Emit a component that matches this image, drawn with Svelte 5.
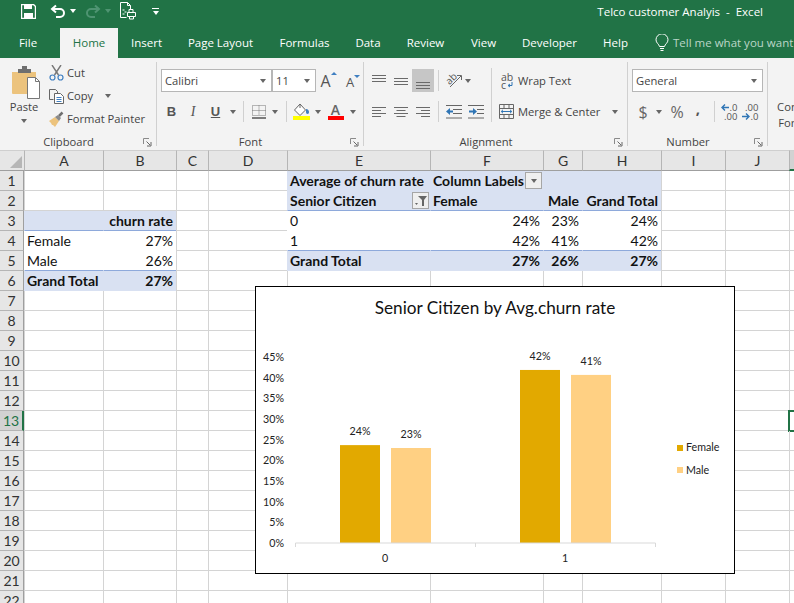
<script>
  const tabs = ['File', 'Home', 'Insert', 'Page Layout', 'Formulas', 'Data', 'Review', 'View', 'Developer', 'Help'];
  const cols = ['A', 'B', 'C', 'D', 'E', 'F', 'G', 'H', 'I', 'J', 'K'];
  const rowNums = Array.from({ length: 22 }, (_, i) => i + 1);

  const pv = 'pv';
  const hd = 'pv fill bold';
  const cells = {
    A3: { c: hd + ' line' },
    B3: { t: 'churn rate', c: hd + ' line right' },
    A4: { t: 'Female', c: pv },
    B4: { t: '27%', c: pv + ' right' },
    A5: { t: 'Male', c: pv + ' line' },
    B5: { t: '26%', c: pv + ' right line' },
    A6: { t: 'Grand Total', c: hd },
    B6: { t: '27%', c: hd + ' right' },
    E1: { t: 'Average of churn rate', c: hd },
    F1: { t: 'Column Labels', c: hd, btn: 'drop' },
    G1: { c: hd },
    H1: { c: hd },
    E2: { t: 'Senior Citizen', c: hd + ' line', btn: 'filter' },
    F2: { t: 'Female', c: hd + ' line' },
    G2: { t: 'Male', c: hd + ' line right' },
    H2: { t: 'Grand Total', c: hd + ' line right' },
    E3: { t: '0', c: pv },
    F3: { t: '24%', c: pv + ' right' },
    G3: { t: '23%', c: pv + ' right' },
    H3: { t: '24%', c: pv + ' right' },
    E4: { t: '1', c: pv + ' line' },
    F4: { t: '42%', c: pv + ' line right' },
    G4: { t: '41%', c: pv + ' line right' },
    H4: { t: '42%', c: pv + ' line right' },
    E5: { t: 'Grand Total', c: hd },
    F5: { t: '27%', c: hd + ' right' },
    G5: { t: '26%', c: hd + ' right' },
    H5: { t: '27%', c: hd + ' right' },
    K13: { c: 'sel' }
  };

  // chart, in page coordinates (the svg viewBox starts at the chart's corner)
  const base = 543;
  const perPct = 4.13;
  const ticks = [0, 5, 10, 15, 20, 25, 30, 35, 40, 45];
  const bars = [
    { x: 340, v: 23.7, label: '24%', color: '#e2a900' },
    { x: 391, v: 23, label: '23%', color: '#ffd083' },
    { x: 520, v: 41.9, label: '42%', color: '#e2a900' },
    { x: 571, v: 40.7, label: '41%', color: '#ffd083' }
  ];

  const alignTop = [[0, 14, 2], [0, 14, 5], [0, 14, 8]];
  const alignMid = [[0, 14, 5], [0, 14, 8], [0, 14, 11]];
  const alignBot = [[0, 14, 9], [0, 14, 12], [0, 14, 15]];
  const left = [[0, 14, 3], [0, 9, 6], [0, 14, 9], [0, 9, 12]];
  const center = [[0, 14, 3], [2.5, 11.5, 6], [0, 14, 9], [2.5, 11.5, 12]];
  const rightLines = [[0, 14, 3], [5, 14, 6], [0, 14, 9], [5, 14, 12]];
</script>

{#snippet lines(rows)}
  <svg class="ic" width="14" height="16" viewBox="0 0 14 16">
    {#each rows as r}
      <path d="M{r[0]} {r[2] + 0.5}H{r[1]}" stroke="#6a6a6a" fill="none" />
    {/each}
  </svg>
{/snippet}

{#snippet launcher()}
  <svg class="launch" width="9" height="9" viewBox="0 0 9 9">
    <path d="M.5 6V.5H6" stroke="#8a8a8a" fill="none" />
    <path d="M3.5 3.5L7 7M8 4v4H4" stroke="#666" fill="none" />
  </svg>
{/snippet}

<div class="app">
  <header class="qat">
    <svg class="ic qs" width="15" height="15" viewBox="0 0 15 15">
      <path d="M.5.5h12l2 2v12H.5z" fill="none" stroke="#fff" stroke-width="1.4" />
      <path d="M3 1h8v4H3zM3 9h9v5H3z" fill="#fff" />
    </svg>
    <svg class="ic qu" width="16" height="15" viewBox="0 0 16 15">
      <path d="M6 1.5L2 5l4 3.5M2.5 5H10a4 4 0 0 1 0 8H6" fill="none" stroke="#fff" stroke-width="2" />
    </svg>
    <i class="caret white q1"></i>
    <svg class="ic q2" width="16" height="15" viewBox="0 0 16 15">
      <path d="M10 1.5L14 5l-4 3.5M13.5 5H6a4 4 0 0 0 0 8h4" fill="none" stroke="#4f9472" stroke-width="2" />
    </svg>
    <i class="caret dim q1"></i>
    <svg class="ic q3" width="17" height="18" viewBox="0 0 17 18">
      <path d="M1.5.5h7l3 3v4M1.5.5v15h6" fill="none" stroke="#fff" />
      <path d="M8.5.5v3h3M3.5 8h2M5.5 10h2M3.5 12h2" fill="none" stroke="#fff" />
      <path d="M10 7.5h4v3h-4zM8.5 10.5h8v4h-8zM10.5 14.5h4v2.5h-4z" fill="#217346" stroke="#fff" />
    </svg>
    <span class="custom">
      <i class="bar"></i>
      <i class="caret white"></i>
    </span>
    <span class="doc">Telco customer Analyis&nbsp; -&nbsp; Excel</span>
  </header>

  <nav class="tabs">
    {#each tabs as tab}
      <span class="tab" class:active={tab === 'Home'} class:file={tab === 'File'}>{tab}</span>
    {/each}
    <span class="tell">
      <svg width="14" height="18" viewBox="0 0 14 18">
        <path d="M4.5 12.5C4 10 1 9 1 5.8a6 6 0 0 1 12 0c0 3.2-3 4.2-3.5 6.7zM5 14.5h4M5.5 16.5h3" fill="none" stroke="#fff" />
      </svg>
      Tell me what you want to do
    </span>
  </nav>

  <section class="ribbon">
    <div class="group g-clip">
      <div class="body clip">
        <div class="paste">
          <svg class="ic" width="29" height="33" viewBox="0 0 29 33">
            <path d="M0 6h24v21a1 1 0 0 1-1 1H1a1 1 0 0 1-1-1z" fill="#ecc37d" />
            <path d="M6 3h4V0h5v3h4v4H6z" fill="#6f6f6f" />
            <path d="M15.5 11.5h8l4 4v17h-12z" fill="#fff" stroke="#777" />
            <path d="M23.5 11.5v4h4" fill="none" stroke="#777" />
          </svg>
          <span>Paste</span>
          <i class="caret"></i>
        </div>
        <div class="clip-rows">
          <div class="clip-row">
            <svg class="ic" width="15" height="16" viewBox="0 0 15 16">
              <path d="M3 0l6.5 10M12 0L5.5 10" stroke="#777" stroke-width="1.4" fill="none" />
              <circle cx="3.5" cy="12.5" r="2.5" fill="none" stroke="#3f7fc1" stroke-width="1.2" />
              <circle cx="11.5" cy="12.5" r="2.5" fill="none" stroke="#3f7fc1" stroke-width="1.2" />
            </svg>
            Cut
          </div>
          <div class="clip-row">
            <svg class="ic" width="15" height="16" viewBox="0 0 15 16">
              <path d="M.5 1.5h6l2 2v2M.5 1.5v10h4" fill="none" stroke="#666" />
              <path d="M5.500 5.500h6l3 3v7h-9z" fill="#fff" stroke="#666" />
              <path d="M7.5 9.5h5M7.5 11.5h5M7.5 13.5h5" stroke="#3f7fc1" />
            </svg>
            Copy
            <i class="caret copy-caret"></i>
          </div>
          <div class="clip-row">
            <svg class="ic" width="15" height="16" viewBox="0 0 15 16">
              <path d="M0 10l6-4 4 4-4 6-2-2-1 0-1-2z" fill="#ecc37d" />
              <path d="M6 6l3-2 3 3-2 3z" fill="#8a8a8a" />
              <path d="M10 5l3.5-3.5" stroke="#6f6f6f" stroke-width="2.5" />
            </svg>
            Format Painter
          </div>
        </div>
      </div>
      <div class="label"><span>Clipboard</span>{@render launcher()}</div>
    </div>

    <div class="group g-font">
      <div class="body rows">
        <div class="row font-a">
          <div class="combo">Calibri<i class="caret"></i></div>
          <div class="combo">11<i class="caret"></i></div>
          <span class="grow">A<i class="tip"></i></span>
          <span class="grow small">A<i class="tip down"></i></span>
        </div>
        <div class="row font-b">
          <b class="glyph">B</b>
          <i class="glyph ital">I</i>
          <b class="glyph under">U</b>
          <i class="caret"></i>
          <i class="vsep"></i>
          <svg class="ic" width="14" height="14" viewBox="0 0 14 14">
            <path d="M.5.5h13v10h-13zM7 .5v10M.5 5.5h13" fill="none" stroke="#777" stroke-dasharray="1 1" />
            <path d="M0 13h14" stroke="#555" stroke-width="1.5" />
          </svg>
          <i class="caret"></i>
          <i class="vsep"></i>
          <svg class="ic" width="17" height="18" viewBox="0 0 17 18">
            <path d="M7 1L1.5 7 7 12.5 12.5 7z" fill="#fff" stroke="#666" />
            <path d="M7 1V5" stroke="#666" />
            <path d="M13 6c2 0 3 1.5 3 3 0 1-.5 2-1.5 2S13 10 13 9z" fill="#3f7fc1" />
            <rect y="13" width="17" height="4" fill="#ffff00" />
          </svg>
          <i class="caret"></i>
          <span class="fcolor">A<i></i></span>
          <i class="caret"></i>
        </div>
      </div>
      <div class="label"><span>Font</span>{@render launcher()}</div>
    </div>

    <div class="group g-align">
      <div class="body rows-split">
        <div class="rows align-left">
          <div class="row al-a">
            {@render lines(alignTop)}
            {@render lines(alignMid)}
            <span class="pressed">{@render lines(alignBot)}</span>
            <i class="vsep"></i>
            <span class="orient">
              <svg class="ic" width="17" height="17" viewBox="0 0 17 17">
                <text x="1" y="11" transform="rotate(-45 5 9)" class="orient-t">ab</text>
                <path d="M4 15L15 4M11 3.5h4.5V8" fill="none" stroke="#666" />
              </svg>
              <i class="caret"></i>
            </span>
          </div>
          <div class="row al-b">
            {@render lines(left)}
            {@render lines(center)}
            {@render lines(rightLines)}
            <i class="vsep"></i>
            <svg class="ic" width="16" height="14" viewBox="0 0 16 14">
              <path d="M0 .5h16M7 4.5h9M7 8.5h9M0 13h16" stroke="#666" fill="none" />
              <path d="M0 6.500L4 3v2.5h3v2H4V10z" fill="#2f75b5" />
            </svg>
            <svg class="ic" width="16" height="14" viewBox="0 0 16 14">
              <path d="M0 .5h16M9 4.5h7M9 8.5h7M0 13h16" stroke="#666" fill="none" />
              <path d="M9 6.5L5 3v2.5H1v2h4V10z" fill="#2f75b5" />
            </svg>
          </div>
        </div>
        <i class="vsep tall"></i>
        <div class="rows align-right">
          <div class="row wrap">
            <span class="abc">
              <span>ab</span>
              <span class="abc-c">c
                <svg width="6" height="6" viewBox="0 0 6 6">
                  <path d="M5 0v3.500H1.500M3 2L1 3.500 3 5" fill="none" stroke="#2f75b5" />
                </svg>
              </span>
            </span>
            Wrap Text
          </div>
          <div class="row merge">
            <svg class="ic" width="15" height="15" viewBox="0 0 15 15">
              <path d="M.5.5h14v14H.5zM.5 4.5h14M.5 10.5h14M5 .5v4M10 .5v4M5 10.5v4M10 10.5v4" fill="none" stroke="#666" />
              <path d="M2.5 7.5h10" stroke="#2f75b5" />
              <path d="M4 5.8L2.2 7.5 4 9.2M11 5.8l1.8 1.7L11 9.2" fill="none" stroke="#2f75b5" />
            </svg>
            Merge &amp; Center
            <i class="caret merge-caret"></i>
          </div>
        </div>
      </div>
      <div class="label"><span>Alignment</span>{@render launcher()}</div>
    </div>

    <div class="group g-num">
      <div class="body rows">
        <div class="row num-a">
          <div class="combo">General<i class="caret"></i></div>
        </div>
        <div class="row num-b">
          <span class="big">$</span>
          <i class="caret"></i>
          <span class="big">%</span>
          <b class="comma">,</b>
          <i class="vsep"></i>
          <span class="dec">
            <span class="dec-row">
              <svg width="8" height="7" viewBox="0 0 8 7"><path d="M8 3.5H2M4 .5l-3 3 3 3" fill="none" stroke="#2f75b5" stroke-width="1.4" /></svg>
              .0
            </span>
            <span>.00</span>
          </span>
          <span class="dec">
            <span>.00</span>
            <span class="dec-row">
              <svg width="8" height="7" viewBox="0 0 8 7"><path d="M0 3.5h6M4 .5l3 3-3 3" fill="none" stroke="#2f75b5" stroke-width="1.4" /></svg>
              .0
            </span>
          </span>
        </div>
      </div>
      <div class="label"><span>Number</span>{@render launcher()}</div>
    </div>

    <div class="cond">Conditional<br />Formatting</div>
  </section>

  <main class="sheet">
    <div class="corner"><i></i></div>
    {#each cols as col}
      <div class="colhead" class:on={col === 'K'}>{col}</div>
    {/each}
    {#each rowNums as n}
      <div class="rowhead" class:on={n === 13}>{n}</div>
      {#each cols as col}
        {@const cell = cells[col + n]}
        <div class="cell {cell ? cell.c : ''}">
          {#if cell && cell.t}<span>{cell.t}</span>{/if}
          {#if cell && cell.btn === 'drop'}
            <i class="fbtn"><i class="caret"></i></i>
          {:else if cell && cell.btn === 'filter'}
            <i class="fbtn">
              <svg width="14" height="12" viewBox="0 0 14 12">
                <path d="M4 1h9L10 5v6H8V5z" fill="#666" />
                <path d="M1 8h3L2.5 10z" fill="#666" />
              </svg>
            </i>
          {/if}
        </div>
      {/each}
    {/each}

    <figure class="chart">
      <svg width="478" height="286" viewBox="256 287 478 286">
        <text class="title" x="495" y="314">Senior Citizen by Avg.churn rate</text>
        {#each ticks as t}
          <text class="tick" x="284" y={base - t * perPct + 4}>{t}%</text>
        {/each}
        {#each bars as b}
          <rect x={b.x} y={base - b.v * perPct} width="40" height={b.v * perPct} fill={b.color} />
          <text class="val" x={b.x + 20} y={base - b.v * perPct - 10}>{b.label}</text>
        {/each}
        <path d="M295.5 547v-4h360v4M475.5 543v4" fill="none" stroke="#d9d9d9" />
        <text class="val" x="385" y="562">0</text>
        <text class="val" x="565" y="562">1</text>
        <rect x="677" y="445" width="6" height="6" fill="#e2a900" />
        <text class="leg" x="686" y="451">Female</text>
        <rect x="677" y="467" width="6" height="6" fill="#ffd083" />
        <text class="leg" x="686" y="474">Male</text>
      </svg>
    </figure>
  </main>
</div>

<style>
  :global(body) {
    margin: 0;
    overflow: hidden;
  }

  .app {
    width: 794px;
    height: 603px;
    overflow: hidden;
    background: #fff;
    font-family: "Open Sans", sans-serif;
    font-size: 11.5px;
    color: #444;
  }

  i {
    font-style: normal;
  }

  .ic {
    display: block;
    flex: none;
  }

  .caret {
    display: block;
    flex: none;
    width: 0;
    height: 0;
    border: 3.5px solid transparent;
    border-top: 4px solid #666;
    border-bottom: 0;
  }

  .caret.white {
    border-top-color: #fff;
  }

  .caret.dim {
    border-top-color: #4f9472;
  }

  /* title bar */
  .qat {
    height: 28px;
    box-sizing: border-box;
    padding-bottom: 6px;
    background: #217346;
    display: flex;
    align-items: center;
    color: #fff;
  }

  .qs {
    margin-left: 21px;
  }

  .qu {
    margin-left: 14px;
  }

  .q1 {
    margin-left: 4px;
  }

  .q2 {
    margin-left: 9px;
  }

  .q3 {
    margin-left: 8px;
  }

  .custom {
    display: flex;
    flex-direction: column;
    align-items: center;
    gap: 2px;
    margin-left: 16px;
  }

  .bar {
    display: block;
    width: 7px;
    height: 1px;
    background: #fff;
  }

  .doc {
    margin-left: auto;
    margin-right: 31px;
  }

  /* tabs */
  .tabs {
    height: 30px;
    background: #217346;
    display: grid;
    grid-template-columns: 54px 58px 57px 91px 77px 50px 65px 51px 81px 51px auto;
    padding-left: 6px;
    color: #fff;
    line-height: 30px;
    white-space: nowrap;
  }

  .tab {
    text-align: center;
  }

  .tab.file {
    padding-right: 10px;
  }

  .tab.active {
    background: #f3f3f3;
    color: #217346;
  }

  .tell {
    display: flex;
    align-items: center;
    gap: 4px;
    padding-left: 14px;
    color: #bcd6c8;
  }

  /* ribbon */
  .ribbon {
    height: 88px;
    padding-top: 4px;
    background: #f3f3f3;
    display: flex;
    align-items: flex-start;
    font-size: 11.2px;
    white-space: nowrap;
    overflow: hidden;
  }

  .group {
    height: 84px;
    border-right: 1px solid #d0d0d0;
    box-sizing: border-box;
    display: flex;
    flex-direction: column;
    flex: none;
  }

  .g-clip {
    width: 157px;
  }

  .g-font {
    width: 207px;
  }

  .g-align {
    width: 264px;
  }

  .g-num {
    width: 140px;
  }

  .body {
    height: 71px;
    flex: none;
  }

  .label {
    display: flex;
    align-items: center;
    height: 16px;
    flex: none;
    padding-right: 4px;
  }

  .label span {
    flex: 1;
    text-align: center;
    padding-right: 6px;
  }

  .launch {
    flex: none;
    margin-top: 2px;
  }

  .clip {
    display: flex;
  }

  .paste {
    width: 48px;
    display: flex;
    flex-direction: column;
    align-items: center;
    padding: 4px 0 0 4px;
    box-sizing: border-box;
    line-height: 16px;
  }

  .paste span {
    margin: 0 4px 0 0;
  }

  .paste .caret {
    margin: 4px 4px 0 0;
  }

  .clip-rows {
    margin: -1px 0 0 1px;
  }

  .clip-row {
    height: 23px;
    display: flex;
    align-items: center;
    gap: 3px;
  }

  .copy-caret {
    margin-left: 9px;
  }

  .rows {
    padding-top: 7px;
    box-sizing: border-box;
    display: flex;
    flex-direction: column;
    gap: 8px;
  }

  .row {
    height: 23px;
    flex: none;
    display: grid;
    align-items: center;
    justify-items: center;
  }

  .vsep {
    display: block;
    width: 1px;
    height: 21px;
    background: #d0d0d0;
  }

  .vsep.tall {
    margin-top: 6px;
    height: 54px;
    flex: none;
  }

  .combo {
    height: 23px;
    width: 100%;
    box-sizing: border-box;
    background: #fff;
    border: 1px solid #b6b6b6;
    padding: 0 5px 0 3px;
    display: flex;
    align-items: center;
    justify-content: space-between;
  }

  .font-a {
    grid-template-columns: 111px 44px 25px 24px;
    margin-left: 4px;
  }

  .font-b {
    grid-template-columns: 21px 22px 23px 11px 11px 19px 13px 10px 21px 12px 23px 11px;
    margin-left: 4px;
  }

  .grow {
    display: flex;
    font-size: 16px;
    color: #555;
  }

  .grow.small {
    font-size: 13px;
    padding-top: 3px;
  }

  .tip {
    display: block;
    margin-top: 2px;
    border: 3px solid transparent;
    border-top: 0;
    border-bottom: 3px solid #3f7fc1;
    width: 0;
    height: 0;
  }

  .tip.down {
    border-bottom: 0;
    border-top: 3px solid #3f7fc1;
  }

  .glyph {
    font-size: 13px;
    color: #555;
    font-family: "Liberation Sans", sans-serif;
  }

  .ital {
    font-family: "Liberation Serif", serif;
    font-style: italic;
    font-size: 14px;
  }

  .under {
    text-decoration: underline;
  }

  .fcolor {
    display: flex;
    flex-direction: column;
    align-items: center;
    font-size: 14px;
    line-height: 13px;
    font-weight: 600;
    color: #666;
  }

  .fcolor i {
    display: block;
    width: 16px;
    height: 4px;
    background: #f00;
  }

  .rows-split {
    display: flex;
  }

  .align-left {
    width: 123px;
    flex: none;
    margin-left: 4px;
  }

  .al-a {
    grid-template-columns: 22px 22px 22px 8px 32px;
  }

  .al-b {
    grid-template-columns: 22px 22px 22px 8px 24px 20px;
  }

  .pressed {
    width: 22px;
    height: 23px;
    background: #c6c6c6;
    display: flex;
    align-items: center;
    justify-content: center;
  }

  .orient {
    display: flex;
    align-items: center;
    gap: 2px;
  }

  .orient-t {
    font-size: 10px;
    fill: #555;
  }

  .wrap,
  .merge {
    display: flex;
  }

  .wrap {
    padding-left: 9px;
    gap: 4px;
  }

  .merge {
    padding-left: 7px;
    gap: 4px;
  }

  .merge-caret {
    margin-left: 8px;
  }

  .abc {
    display: flex;
    flex-direction: column;
    font-size: 10.5px;
    line-height: 8px;
    width: 13px;
    color: #555;
  }

  .abc-c {
    display: flex;
    align-items: center;
    gap: 1px;
  }

  .num-a {
    grid-template-columns: 131px;
    margin-left: 4px;
  }

  .num-b {
    grid-template-columns: 22px 10px 26px 16px 16px 14px 28px;
    margin-left: 4px;
  }

  .big {
    font-size: 16px;
    color: #666;
  }

  .comma {
    font-size: 15px;
    color: #555;
    margin-top: -8px;
  }

  .dec {
    display: flex;
    flex-direction: column;
    align-items: flex-end;
    font-size: 9.5px;
    line-height: 9px;
    color: #555;
  }

  .dec-row {
    display: flex;
    align-items: center;
    gap: 1px;
  }

  .cond {
    flex: none;
    width: 78px;
    margin-top: 37px;
    text-align: center;
    line-height: 16px;
  }

  /* grid */
  .sheet {
    position: relative;
    display: grid;
    grid-template-columns: 24px 79px 73px 32px 79px 143px 113px 39px 79px 64px 64px 64px;
    grid-template-rows: 21px;
    grid-auto-rows: 20px;
    font-family: Lato, sans-serif;
    font-size: 14px;
    color: #111;
    height: 453px;
    overflow: hidden;
  }

  .corner {
    box-sizing: border-box;
    background: #e6e6e6;
    border-top: 1px solid #cfcfcf;
    border-bottom: 1px solid #9f9f9f;
    position: relative;
  }

  .corner i {
    position: absolute;
    right: 2px;
    bottom: 2px;
    border: 6px solid transparent;
    border-right-color: #b6b6b6;
    border-bottom-color: #b6b6b6;
  }

  .colhead,
  .rowhead {
    box-sizing: border-box;
    background: #e6e6e6;
    color: #333;
    display: flex;
    align-items: center;
    justify-content: center;
  }

  .colhead {
    border-top: 1px solid #cfcfcf;
    border-left: 1px solid #b5b5b5;
    border-bottom: 1px solid #9f9f9f;
  }

  .rowhead {
    border-right: 1px solid #9f9f9f;
    border-bottom: 1px solid #b5b5b5;
  }

  .colhead.on {
    background: #d2d2d2;
    border-bottom: 2px solid #217346;
  }

  .rowhead.on {
    background: #d2d2d2;
    color: #217346;
    border-right: 2px solid #217346;
  }

  .cell {
    box-sizing: border-box;
    border-left: 1px solid #d4d4d4;
    border-bottom: 1px solid #d4d4d4;
    padding: 0 3px 0 2px;
    display: flex;
    align-items: center;
    justify-content: space-between;
    white-space: nowrap;
    min-width: 0;
  }

  .pv {
    border-left-color: #fff;
    border-bottom-color: #fff;
  }

  .fill {
    background: #d9e1f2;
    border-left-color: #d9e1f2;
    border-bottom-color: #d9e1f2;
  }

  .bold {
    font-weight: 700;
  }

  .right {
    justify-content: flex-end;
  }

  .line {
    border-bottom-color: #8ea9db;
  }

  .sel {
    outline: 2px solid #217346;
    outline-offset: -1px;
  }

  .fbtn {
    width: 17px;
    height: 17px;
    margin-right: -2px;
    box-sizing: border-box;
    border: 1px solid #a6a6a6;
    background: #efefef;
    display: flex;
    align-items: center;
    justify-content: center;
    flex: none;
  }

  .chart {
    position: absolute;
    left: 255px;
    top: 136px;
    margin: 0;
    width: 480px;
    height: 288px;
    box-sizing: border-box;
    border: 1px solid #000;
    background: #fff;
  }

  .chart svg {
    display: block;
  }

  .title {
    font-size: 17.2px;
    text-anchor: middle;
    fill: #111;
  }

  .tick,
  .val,
  .leg {
    font-size: 10.7px;
    fill: #222;
  }

  .tick {
    text-anchor: end;
  }

  .val {
    text-anchor: middle;
  }
</style>
